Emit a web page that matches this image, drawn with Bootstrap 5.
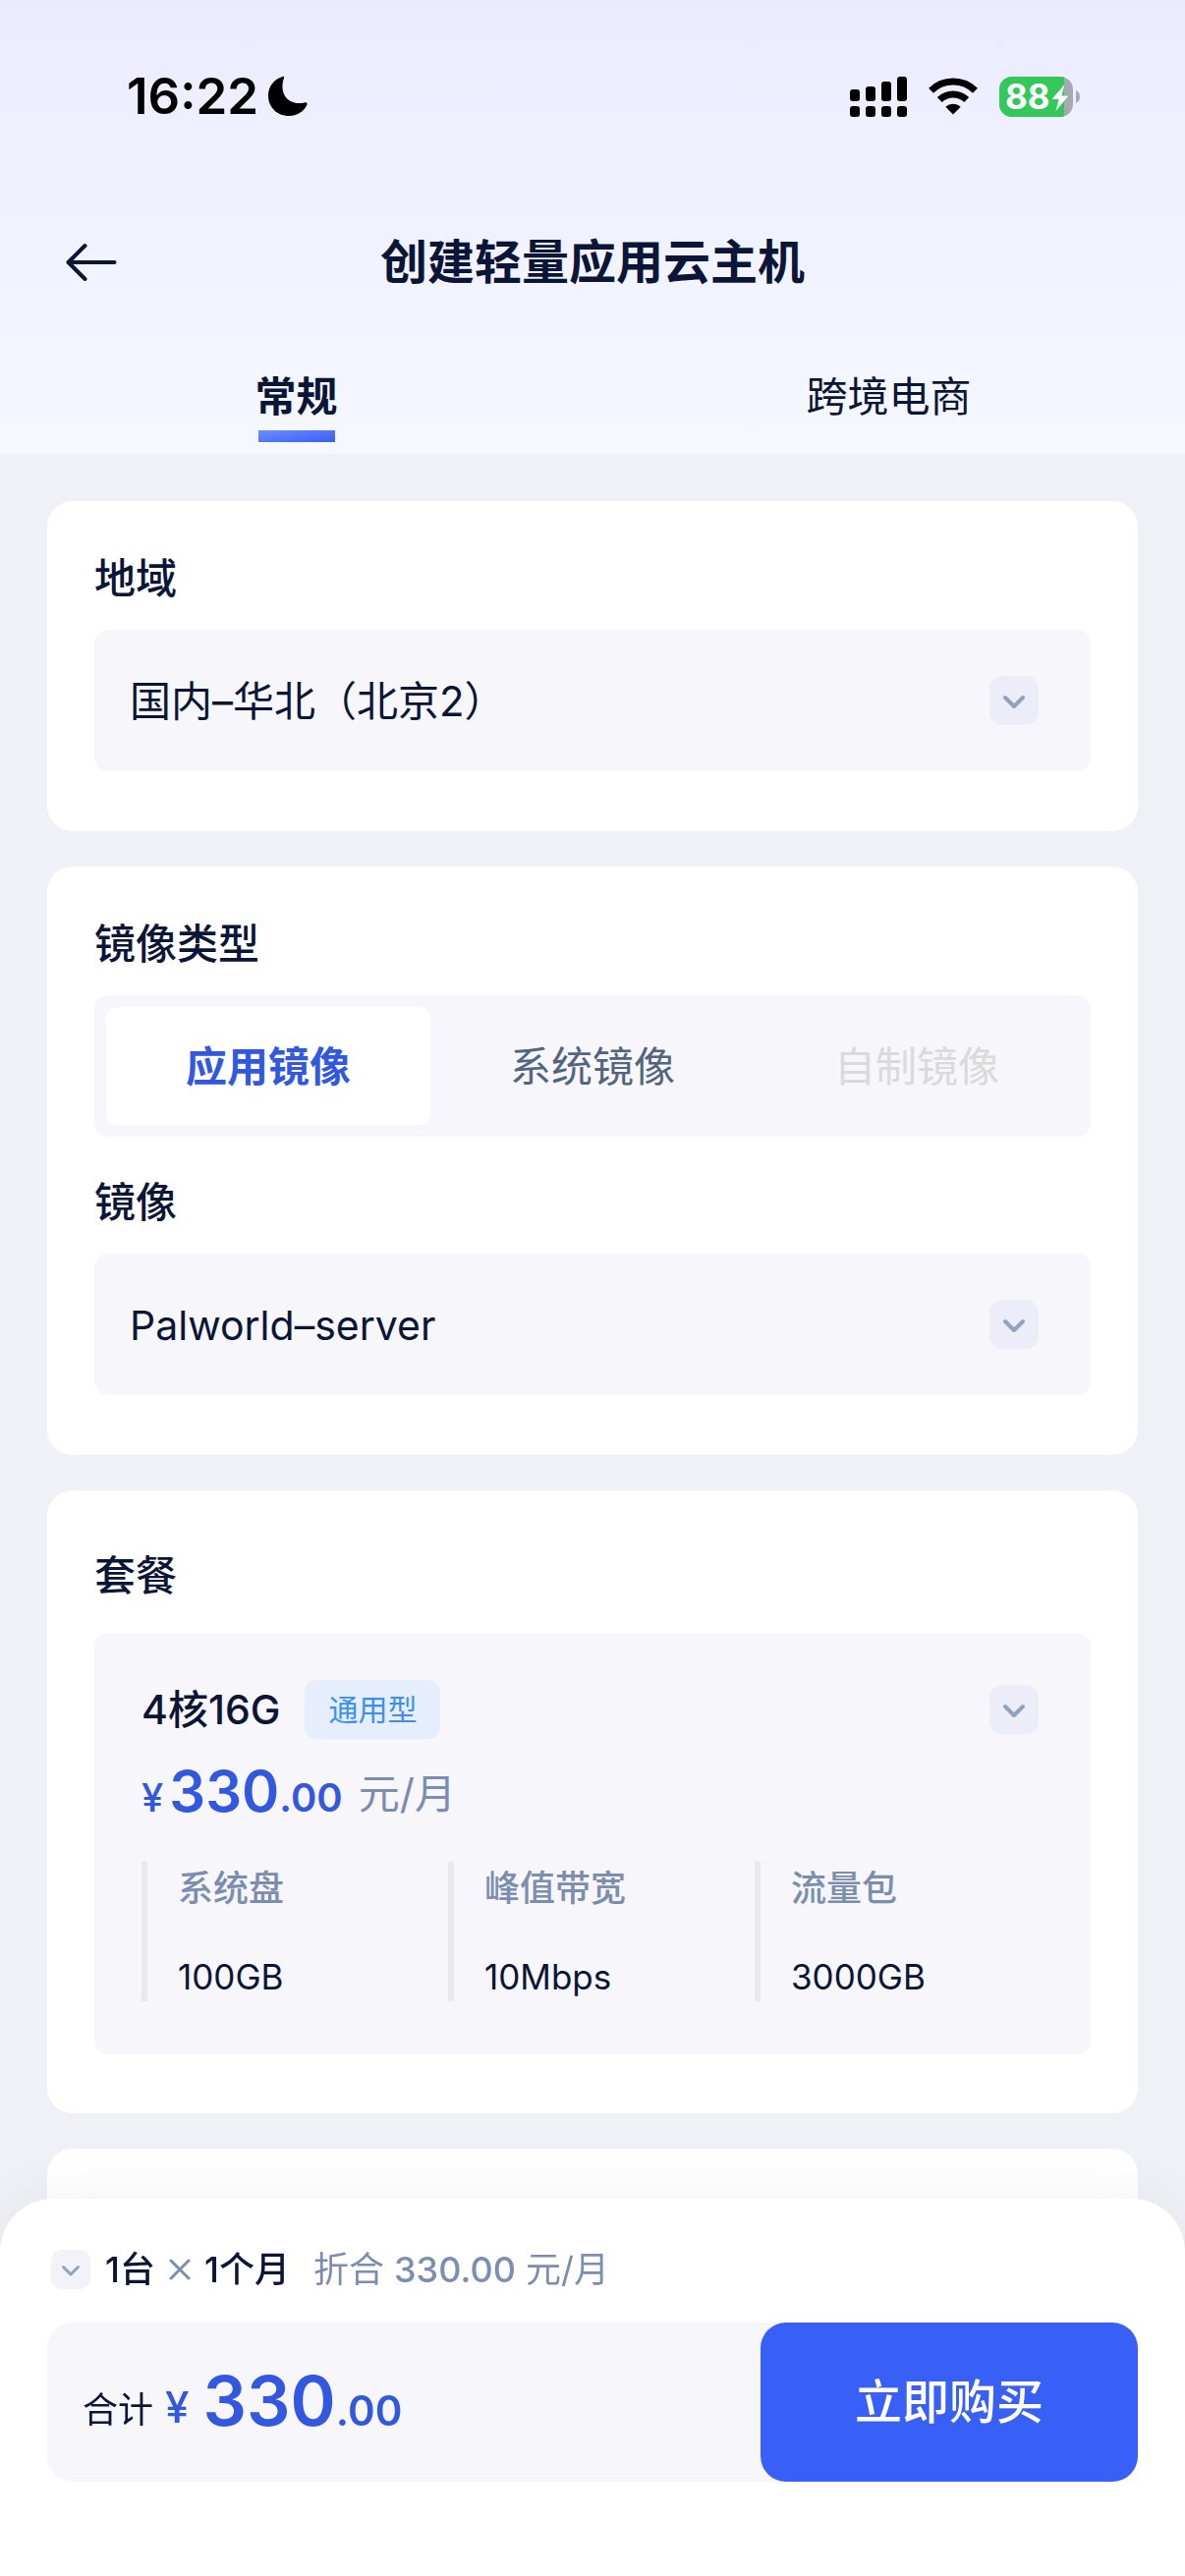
<!DOCTYPE html>
<html lang="zh-CN">
<head>
<meta charset="utf-8">
<meta name="viewport" content="width=device-width, initial-scale=1">
<title>创建轻量应用云主机</title>
<link href="https://cdn.jsdelivr.net/npm/bootstrap@5.3.0/dist/css/bootstrap.min.css" rel="stylesheet">
<style>
  :root {
    --ink: #0b1636;
    --muted: #7b8db0;
    --brand: #3358e0;
    --field: #f6f6fb;
  }
  body {
    font-family: Inter, "Noto Sans CJK SC", sans-serif;
    font-size: 42px;
    line-height: 60px;
    color: var(--ink);
    background: #f0f1f7;
  }
  .app-head { background: linear-gradient(#ebebff, #f5f8ff); }
  .status-row { height: 196px; padding: 0 107px 0 129px; color: #000; }
  .status-icons { gap: 22px; }
  .clock { font-size: 51px; font-weight: 600; }
  .title-row { height: 140px; padding: 2px 64px 0; display: grid; grid-template-columns: 60px 1fr 60px; align-items: center; }
  .page-title { font-size: 48px; font-weight: 700; }
  .tab-link { height: 126px; padding-top: 38px; color: var(--ink); text-decoration: none; }
  .tab-link span { display: block; }
  .tab-link.active { font-weight: 700; }
  .tab-link.active::after { content: ""; width: 78px; height: 12px; margin-top: 4px; background: linear-gradient(170deg, #6c8dff, #385ff6); }
  .panels { padding: 48px 48px 0; gap: 36px; }
  .panel { background: #fff; border-radius: 26px; padding: 49px 48px 61px; }
  .panel-plan { padding: 57px 48px 60px; }
  .field-label { display: block; font-size: 42px; line-height: 60px; font-weight: 500; margin: 0 0 22px; }
  .panel-plan .field-label { margin-bottom: 28px; }
  .pick { height: 144px; padding: 2px 120px 0 36px; font-size: 42px; border: 0; border-radius: 14px; background: var(--field); color: var(--ink); appearance: none; }
  .pick-latin { font-size: 41px; }
  .chev { width: 50px; height: 50px; }
  .pick-chev { right: 53px; pointer-events: none; }
  .segments { padding: 12px; border-radius: 14px; background: var(--field); margin-bottom: 37px; }
  .segments label { height: 120px; padding-top: 2px; line-height: 118px; border-radius: 12px; color: #52647f; text-align: center; cursor: pointer; }
  .segments .btn-check:checked + label { background: #fff; color: var(--brand); font-weight: 700; }
  .segments .btn-check:disabled + label { color: #dadada; }
  .plan { padding: 48px 30px 54px 48px; border-radius: 14px; background: var(--field); }
  .plan-top { height: 60px; padding-right: 23px; }
  .plan-name { font-size: 41px; font-weight: 500; margin-right: 25px; }
  .plan-tag { height: 60px; padding: 0 24px; font-size: 30px; border-radius: 12px; background: #e6eefd; color: #3a8ff5; }
  .money { color: var(--brand); font-weight: 600; }
  .plan-price { height: 84px; line-height: 84px; margin: 14px 0 27px; }
  .plan-price .yen { font-size: 40px; font-weight: 500; margin-right: 6px; }
  .plan-price .money { font-size: 40px; }
  .plan-price b { font-size: 58px; font-weight: 600; }
  .unit { color: var(--muted); }
  .spec { height: 142px; padding: 2px 0 0 31px; border-left: 6px solid #e8e8ed; font-size: 36px; line-height: 50px; margin: 0; }
  .spec dt { font-weight: 500; color: var(--muted); margin-bottom: 40px; }
  .spec dd { margin: 0; font-size: 35px; }
  .sheet { padding: 48px 48px 96px; border-radius: 54px 54px 0 0; background: #fff; box-shadow: 0 0 60px rgba(0, 0, 0, .06); }
  .sheet-line { height: 48px; padding-left: 4px; margin-bottom: 30px; font-size: 36px; line-height: 48px; }
  .sheet-line .chev { width: 40px; height: 40px; margin-right: 15px; }
  .times { margin: 0 14px; }
  .total { border-radius: 26px; background: var(--field); }
  .total-text { padding-left: 36px; }
  .total-cap { padding-top: 12px; margin-right: 14px; font-size: 36px; }
  .total-cap .money { font-size: 44px; font-weight: 500; margin-left: 12px; }
  .total-num { padding-top: 8px; line-height: 84px; }
  .total-num b { font-size: 70px; font-weight: 600; }
  .buy { flex: 0 0 35%; max-width: 384px; height: 162px; border-radius: 26px; border: 0; background: #385ff6; color: #fff; font-size: 48px; font-weight: 500; }
  .buy:hover { background: #2f53dd; color: #fff; }
</style>
<script src="https://cdn.jsdelivr.net/npm/bootstrap@5.3.0/dist/js/bootstrap.bundle.min.js" defer></script>
</head>
<body class="min-vh-100 d-flex flex-column">

<svg class="d-none" aria-hidden="true">
  <symbol id="chevron" viewBox="0 0 50 50">
    <rect width="50" height="50" rx="13" fill="#ecedf8"/>
    <path d="M16 22l9 9 9-9" fill="none" stroke="#91a1c0" stroke-width="4" stroke-linecap="round" stroke-linejoin="round"/>
  </symbol>
  <symbol id="chevron-soft" viewBox="0 0 40 40">
    <rect width="40" height="40" rx="11" fill="#f2f2f8"/>
    <path d="M12.500 17.500l7.500 7.500 7.500-7.500" fill="none" stroke="#91a1c0" stroke-width="3" stroke-linecap="round" stroke-linejoin="round"/>
  </symbol>
</svg>

<header class="app-head">
  <div class="status-row d-flex align-items-center justify-content-between">
    <div class="d-flex align-items-center">
      <span class="clock">16:22</span>
      <svg class="ms-2" width="42" height="42" viewBox="0 0 42 42" aria-hidden="true"><path d="M16.500 1C18 .5 18.500 1.500 17.800 3C13 17 21 31 39 27.500C41 27 42 28 41.500 29.500C38 37 31 41 23 41C11 41 2 32 2 20.500C2 11 8 3.500 16.500 1Z"/></svg>
    </div>
    <div class="status-icons d-flex align-items-center">
      <svg width="58" height="41" viewBox="0 0 58 41" aria-hidden="true">
        <rect y="13" width="10" height="12" rx="3"/><rect x="16" y="10" width="10" height="15" rx="3"/><rect x="32" y="5" width="10" height="20" rx="3"/><rect x="48" width="10" height="25" rx="3"/>
        <rect y="30" width="10" height="11" rx="3"/><rect x="16" y="30" width="10" height="11" rx="3"/><rect x="32" y="30" width="10" height="11" rx="3"/><rect x="48" y="30" width="10" height="11" rx="3"/>
      </svg>
      <svg width="50" height="38" viewBox="0 0 50 38" aria-hidden="true">
        <path d="M2.500 13.200A32 32 0 0 1 47.500 13.200" fill="none" stroke="#000" stroke-width="7"/>
        <path d="M11.300 22.500A19.500 19.500 0 0 1 38.700 22.500" fill="none" stroke="#000" stroke-width="7"/>
        <path d="M25 37.500L17.300 29.700A11.200 11.200 0 0 1 32.700 29.700Z"/>
      </svg>
      <svg width="82" height="41" viewBox="0 0 82 41" role="img" aria-label="88%">
        <clipPath id="cell"><rect width="75" height="41" rx="13"/></clipPath>
        <g clip-path="url(#cell)"><rect width="75" height="41" fill="#a8a8b3"/><rect width="66" height="41" fill="#34c759"/></g>
        <path d="M78 14q4 2 4 6.500t-4 6.500z" fill="#a8a8b3"/>
        <text x="6" y="33" font-size="35" font-weight="700" fill="#fff">88</text>
        <path d="M66.500 8L53.500 23H60.500L57.500 35L70.500 19.500H63.500Z" fill="#fff" stroke="#34c759" stroke-width="1" paint-order="stroke"/>
      </svg>
    </div>
  </div>
  <div class="title-row">
    <a href="#" aria-label="返回" class="d-flex">
      <svg width="58" height="44" viewBox="0 0 58 44" fill="none" stroke="#0b1636" stroke-width="4" stroke-linecap="round" stroke-linejoin="round" aria-hidden="true"><path d="M52.500 22H5.500M22.500 5L5.500 22L22.500 39"/></svg>
    </a>
    <h1 class="page-title text-center m-0">创建轻量应用云主机</h1>
  </div>
  <nav class="d-flex">
    <a href="#" class="tab-link active d-flex flex-column align-items-center w-50" aria-current="page"><span>常规</span></a>
    <a href="#" class="tab-link d-flex flex-column align-items-center w-50"><span>跨境电商</span></a>
  </nav>
</header>

<main class="panels d-flex flex-column flex-grow-1">
  <section class="panel">
    <label class="field-label" for="region">地域</label>
    <div class="position-relative">
      <select id="region" class="pick w-100"><option>国内–华北（北京2）</option></select>
      <svg class="chev pick-chev position-absolute top-50 translate-middle-y" aria-hidden="true"><use href="#chevron"/></svg>
    </div>
  </section>

  <section class="panel">
    <h2 class="field-label">镜像类型</h2>
    <div class="segments d-flex" role="group" aria-label="镜像类型">
      <input class="btn-check" type="radio" name="kind" id="kind-app" checked>
      <label class="flex-fill w-100" for="kind-app">应用镜像</label>
      <input class="btn-check" type="radio" name="kind" id="kind-sys">
      <label class="flex-fill w-100" for="kind-sys">系统镜像</label>
      <input class="btn-check" type="radio" name="kind" id="kind-own" disabled>
      <label class="flex-fill w-100" for="kind-own">自制镜像</label>
    </div>
    <label class="field-label" for="image">镜像</label>
    <div class="position-relative">
      <select id="image" class="pick pick-latin w-100"><option>Palworld–server</option></select>
      <svg class="chev pick-chev position-absolute top-50 translate-middle-y" aria-hidden="true"><use href="#chevron"/></svg>
    </div>
  </section>

  <section class="panel panel-plan">
    <h2 class="field-label">套餐</h2>
    <div class="plan">
      <div class="plan-top d-flex align-items-center">
        <span class="plan-name">4核16G</span>
        <span class="plan-tag">通用型</span>
        <button type="button" class="btn p-0 border-0 ms-auto d-flex" aria-label="选择套餐"><svg class="chev" aria-hidden="true"><use href="#chevron"/></svg></button>
      </div>
      <div class="plan-price d-flex align-items-center">
        <span class="money"><span class="yen">¥</span><b>330</b>.00</span>
        <span class="unit ms-3">元/月</span>
      </div>
      <div class="row g-0">
        <dl class="spec col-4"><dt>系统盘</dt><dd>100GB</dd></dl>
        <dl class="spec col-4"><dt>峰值带宽</dt><dd>10Mbps</dd></dl>
        <dl class="spec col-4"><dt>流量包</dt><dd>3000GB</dd></dl>
      </div>
    </div>
  </section>

  <section class="panel flex-grow-1"></section>
</main>

<footer class="sheet fixed-bottom">
  <div class="sheet-line d-flex align-items-center">
    <button type="button" class="btn p-0 border-0 d-flex" aria-label="展开明细"><svg class="chev" aria-hidden="true"><use href="#chevron-soft"/></svg></button>
    <span class="fw-medium">1台</span>
    <svg class="times" width="22" height="22" viewBox="0 0 22 22" stroke="#7b8db0" stroke-width="3" stroke-linecap="round" role="img" aria-label="乘"><path d="M2 2l18 18M20 2L2 20"/></svg>
    <span class="fw-medium">1个月</span>
    <span class="unit ms-4">折合 <span class="fw-medium">330.00</span> 元/月</span>
  </div>
  <div class="total d-flex align-items-center justify-content-between">
    <div class="total-text d-flex align-items-center">
      <div class="total-cap">合计<span class="money">¥</span></div>
      <div class="total-num money"><b>330</b>.00</div>
    </div>
    <button type="button" class="btn buy">立即购买</button>
  </div>
</footer>
</body>
</html>
